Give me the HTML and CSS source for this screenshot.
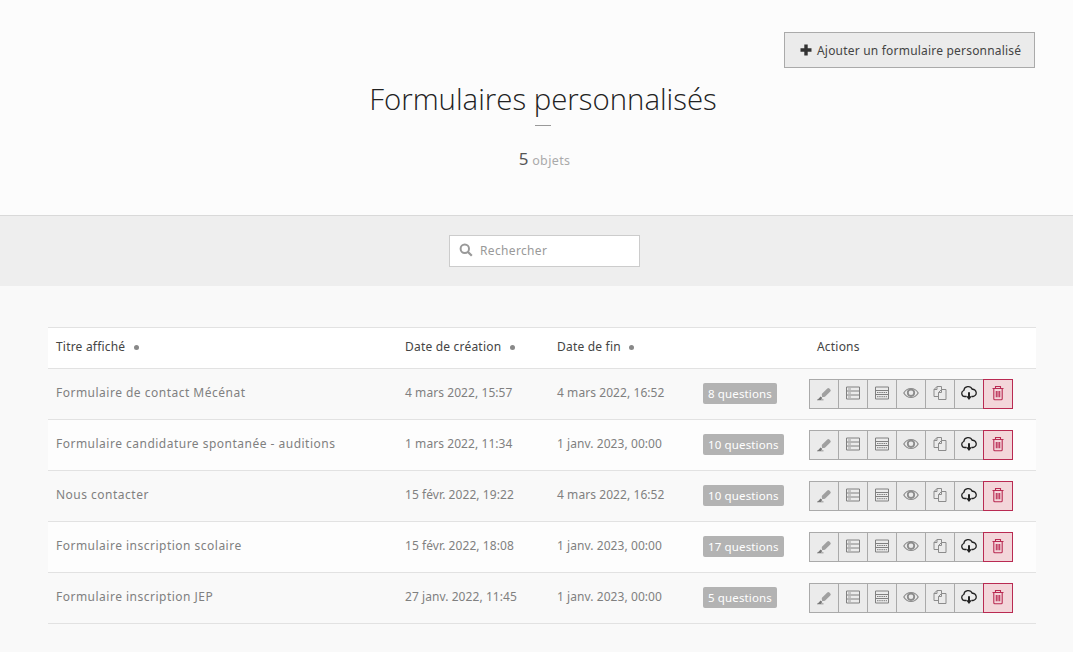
FILE: index.html
```html
<!DOCTYPE html>
<html lang="fr">
<head>
<meta charset="utf-8">
<title>Formulaires personnalisés</title>
<link rel="stylesheet" href="styles.css">
</head>
<body>
<svg class="defs" width="0" height="0" aria-hidden="true">
  <symbol id="i-edit" viewBox="0 0 16 16"><path d="M6.200 8.600 11.300 3.500a1.500 1.500 0 0 1 2.100 0l.9.900a1.500 1.500 0 0 1 0 2.100L9.200 11.600a1.500 1.500 0 0 1-1.100.4l-2 .1-.3-2.200a1.500 1.500 0 0 1 .4-1.300Z" fill="#a0a0a0"/><path d="M1 14.600h6.500v.7H1ZM1.800 14.400 4.600 11.400l1.800 1.500-1.600 1.500Z" fill="#777"/></symbol>
  <symbol id="i-list" viewBox="0 0 16 16"><path d="M1.500 2h13v12h-13ZM1.500 6h13M1.500 10h13" fill="none" stroke="#808080"/><path d="M3 4h3M3 8h3M3 12h3" fill="none" stroke="#a0a0a0"/></symbol>
  <symbol id="i-grid" viewBox="0 0 16 16"><path d="M1.500 2h13v12h-13ZM1.500 5.500h13M1.500 9.500h13" fill="none" stroke="#808080"/><path d="M3 7.500h10M3 11.700h10" fill="none" stroke="#808080" stroke-dasharray="1.500 .7"/></symbol>
  <symbol id="i-eye" viewBox="0 0 16 16"><path d="M.8 8C2.500 5 5 3.500 8 3.500S13.500 5 15.200 8C13.500 11 11 12.500 8 12.500S2.500 11 .8 8Z" fill="none" stroke="#8c8c8c" stroke-width="1.200"/><circle cx="8" cy="7.800" r="3.200" fill="none" stroke="#8c8c8c" stroke-width="1.800"/></symbol>
  <symbol id="i-copy" viewBox="0 0 16 16"><path d="M9.500 4.500V1.500H5L2 4.500v7h4.500M5 1.500v3H2M6.500 14.500V7.500L9.500 4.500H14v10ZM9.500 4.500v3h-3" fill="none" stroke="#8c8c8c"/></symbol>
  <symbol id="i-cloud" viewBox="0 0 16 16"><path d="M5.500 11.500H4A3.100 3.100 0 0 1 2.800 5.500 4.400 4.400 0 0 1 11.200 4.300 3.600 3.600 0 0 1 12 11.500H10.500" fill="none" stroke="#222" stroke-width="1.300"/><path d="M7 7.200h2v4h1.900L8 15 5.100 11.200H7Z" fill="#222"/></symbol>
  <symbol id="i-trash" viewBox="0 0 16 16"><path d="M2.500 3.500h11M5.500 3.500V1.500h5v2M3.800 3.500v10.200a1 1 0 0 0 1 1h6.400a1 1 0 0 0 1-1V3.500M6.300 6v6.300M8 6v6.300M9.700 6v6.300" fill="none" stroke="#b92a52" stroke-width="1.100"/></symbol>
</svg>
<header class="hero">
  <div class="hero-actions">
    <a class="add-btn" href="#">
      <svg class="plus" viewBox="0 0 12 12" width="12" height="12"><path d="M4.300.5h3.400v3.800h3.800v3.400H7.700v3.800H4.300V7.700H.5V4.300h3.800Z" fill="#333"/></svg>
      Ajouter un formulaire personnalisé
    </a>
  </div>
  <h1 class="title">Formulaires personnalisés</h1>
  <div class="rule"></div>
  <p class="count"><span class="count-num">5</span> <span class="count-label">objets</span></p>
</header>
<section class="filter">
  <label class="search">
    <svg viewBox="0 0 14 14" width="14" height="14"><circle cx="5.800" cy="5.800" r="4.200" fill="none" stroke="#999" stroke-width="2"/><path d="m9 9 3.800 3.800" stroke="#999" stroke-width="2.200"/></svg>
    <span>Rechercher</span>
  </label>
</section>
<main class="content">
  <table class="table">
    <thead>
      <tr>
        <th class="c-title">Titre affiché <i class="dot"></i></th>
        <th class="c-date">Date de création <i class="dot"></i></th>
        <th class="c-end">Date de fin <i class="dot"></i></th>
        <th class="c-q"></th>
        <th class="c-act">Actions</th>
      </tr>
    </thead>
    <tbody>
      <tr><td class="name">Formulaire de contact Mécénat</td><td class="when">4 mars 2022, 15:57</td><td class="when">4 mars 2022, 16:52</td><td class="qs"><span class="badge">8 questions</span></td><td class="acts"><div class="btns"><a class="ib"><svg><use href="#i-edit"/></svg></a><a class="ib"><svg><use href="#i-list"/></svg></a><a class="ib"><svg><use href="#i-grid"/></svg></a><a class="ib"><svg><use href="#i-eye"/></svg></a><a class="ib"><svg><use href="#i-copy"/></svg></a><a class="ib"><svg><use href="#i-cloud"/></svg></a><a class="ib del"><svg><use href="#i-trash"/></svg></a></div></td></tr>
      <tr><td class="name">Formulaire candidature spontanée - auditions</td><td class="when">1 mars 2022, 11:34</td><td class="when">1 janv. 2023, 00:00</td><td class="qs"><span class="badge">10 questions</span></td><td class="acts"><div class="btns"><a class="ib"><svg><use href="#i-edit"/></svg></a><a class="ib"><svg><use href="#i-list"/></svg></a><a class="ib"><svg><use href="#i-grid"/></svg></a><a class="ib"><svg><use href="#i-eye"/></svg></a><a class="ib"><svg><use href="#i-copy"/></svg></a><a class="ib"><svg><use href="#i-cloud"/></svg></a><a class="ib del"><svg><use href="#i-trash"/></svg></a></div></td></tr>
      <tr><td class="name">Nous contacter</td><td class="when">15 févr. 2022, 19:22</td><td class="when">4 mars 2022, 16:52</td><td class="qs"><span class="badge">10 questions</span></td><td class="acts"><div class="btns"><a class="ib"><svg><use href="#i-edit"/></svg></a><a class="ib"><svg><use href="#i-list"/></svg></a><a class="ib"><svg><use href="#i-grid"/></svg></a><a class="ib"><svg><use href="#i-eye"/></svg></a><a class="ib"><svg><use href="#i-copy"/></svg></a><a class="ib"><svg><use href="#i-cloud"/></svg></a><a class="ib del"><svg><use href="#i-trash"/></svg></a></div></td></tr>
      <tr><td class="name">Formulaire inscription scolaire</td><td class="when">15 févr. 2022, 18:08</td><td class="when">1 janv. 2023, 00:00</td><td class="qs"><span class="badge">17 questions</span></td><td class="acts"><div class="btns"><a class="ib"><svg><use href="#i-edit"/></svg></a><a class="ib"><svg><use href="#i-list"/></svg></a><a class="ib"><svg><use href="#i-grid"/></svg></a><a class="ib"><svg><use href="#i-eye"/></svg></a><a class="ib"><svg><use href="#i-copy"/></svg></a><a class="ib"><svg><use href="#i-cloud"/></svg></a><a class="ib del"><svg><use href="#i-trash"/></svg></a></div></td></tr>
      <tr><td class="name">Formulaire inscription JEP</td><td class="when">27 janv. 2022, 11:45</td><td class="when">1 janv. 2023, 00:00</td><td class="qs"><span class="badge">5 questions</span></td><td class="acts"><div class="btns"><a class="ib"><svg><use href="#i-edit"/></svg></a><a class="ib"><svg><use href="#i-list"/></svg></a><a class="ib"><svg><use href="#i-grid"/></svg></a><a class="ib"><svg><use href="#i-eye"/></svg></a><a class="ib"><svg><use href="#i-copy"/></svg></a><a class="ib"><svg><use href="#i-cloud"/></svg></a><a class="ib del"><svg><use href="#i-trash"/></svg></a></div></td></tr>
    </tbody>
  </table>
</main>
</body>
</html>
```
FILE: styles.css
```css
* { box-sizing: border-box; }
html, body { margin: 0; padding: 0; }
body {
  width: 1073px;
  height: 652px;
  overflow: hidden;
  background: #f9f9f9;
  font-family: "Noto Sans", "Open Sans", sans-serif;
  font-size: 12px;
  color: #808080;
  letter-spacing: 0.35px;
}
.defs { position: absolute; }
.hero {
  height: 216px;
  background: #fcfcfc;
  border-bottom: 1px solid #d9d9d9;
  padding: 32px 38px 0;
  display: flex;
  flex-direction: column;
  align-items: center;
}
.hero-actions { align-self: flex-end; height: 36px; }
.add-btn {
  display: flex;
  align-items: center;
  gap: 5px;
  width: 251px;
  height: 36px;
  padding-left: 15px;
  background: #ebebeb;
  border: 1px solid #aaa;
  color: #444;
  text-decoration: none;
  font-size: 12px;
  letter-spacing: 0.2px;
}
.plus { flex: none; }
.title {
  margin: 12px 0 0 13px;
  font-family: "Open Sans", sans-serif;
  font-weight: 300;
  font-size: 29.400px;
  line-height: 38px;
  letter-spacing: 0;
  color: #222;
}
.rule { width: 16px; height: 1px; background: #999; margin: 7px 0 0 13px; }
.count { margin: 21px 0 0 16px; line-height: 24px; }
.count-num { font-size: 17px; color: #555; }
.count-label { font-size: 12.500px; color: #aaa; }
.filter {
  height: 70px;
  background: #eee;
  display: flex;
  justify-content: center;
  align-items: center;
  padding-left: 16px;
}
.search {
  display: flex;
  align-items: center;
  gap: 7px;
  width: 191px;
  height: 32px;
  padding: 0 0 2px 9px;
  background: #fff;
  border: 1px solid #ccc;
  color: #999;
}
.content { padding: 41px 37px 0 48px; }
.table { width: 988px; border-collapse: collapse; table-layout: fixed; border-top: 1px solid #e2e2e2; }
.table th, .table td { text-align: left; border-bottom: 1px solid #e2e2e2; }
.table th { height: 41px; background: #fff; font-weight: 400; color: #444; padding: 0 0 4px 8px; letter-spacing: 0.2px; }
.table td { height: 51px; padding: 0 0 4px 8px; }
.table tbody tr:nth-child(even) td { background: #fdfdfd; }
.table td.name { letter-spacing: 0.49px; }
.table td.when { letter-spacing: 0.07px; }
.table td.qs { padding: 0 0 1px 8px; }
.table td.acts { padding: 0; }
.c-title { width: 349px; }
.c-date { width: 152px; }
.c-end { width: 146px; }
.c-q { width: 114px; }
.dot {
  display: inline-block;
  width: 5px;
  height: 5px;
  margin-left: 5px;
  border-radius: 50%;
  background: #888;
  vertical-align: 1px;
}
.badge {
  display: inline-block;
  height: 21px;
  line-height: 21px;
  padding: 0 5px;
  background: #b3b3b3;
  color: #fff;
  border-radius: 2px;
  white-space: nowrap;
  font-size: 11.500px;
  letter-spacing: 0.14px;
}
.btns { display: flex; }
.ib {
  display: flex;
  align-items: center;
  justify-content: center;
  width: 30px;
  height: 30px;
  margin-right: -1px;
  padding-bottom: 3px;
  background: #ebebeb;
  border: 1px solid #aaa;
}
.ib svg { width: 16px; height: 16px; }
.del { background: #f3d6da; border-color: #b92a52; margin-right: 0; }
```
